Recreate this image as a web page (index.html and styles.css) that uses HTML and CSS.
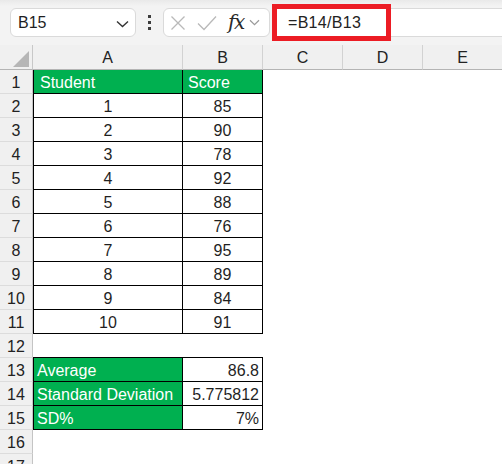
FILE: index.html
```html
<!DOCTYPE html>
<html lang="en">
<head>
  <meta charset="UTF-8" />
  <title>SD% sheet</title>
  <link rel="stylesheet" href="styles.css">
</head>
<body>
  <div class="toolbar">
    <div class="name-box">
      <span>B15</span>
      <svg class="chev" width="13" height="8" viewBox="0 0 13 8"><path d="M1 1.5 L6.5 6.5 L12 1.5" fill="none" stroke="#333" stroke-width="1.4"/></svg>
    </div>
    <div class="dots"><i></i><i></i><i></i></div>
    <div class="fn-box">
      <svg width="16" height="16" viewBox="0 0 16 16"><path d="M1.5 1.5 L14.5 14.5 M14.5 1.5 L1.5 14.5" stroke="#b9b9b9" stroke-width="1.3"/></svg>
      <svg width="20" height="16" viewBox="0 0 20 16"><path d="M1 8.5 L7 14.5 L19 1.5" fill="none" stroke="#b9b9b9" stroke-width="1.3"/></svg>
      <span class="fx">fx</span>
      <svg class="chev-sm" width="11" height="7" viewBox="0 0 11 7"><path d="M1 1.2 L5.5 5.6 L10 1.2" fill="none" stroke="#9a9a9a" stroke-width="1.2"/></svg>
    </div>
    <div class="formula-bar">
      <span class="formula">=B14/B13</span>
    </div>
  </div>

  <div class="sheet">
    <div class="corner"><span class="tri"></span></div>
    <div class="colhead">A</div>
    <div class="colhead">B</div>
    <div class="colhead">C</div>
    <div class="colhead">D</div>
    <div class="colhead">E</div>

    <div class="rowhead">1</div>
    <div class="cell box green first">Student</div>
    <div class="cell box green first">Score</div>
    <div class="cell"></div><div class="cell"></div><div class="cell"></div>

    <div class="rowhead">2</div><div class="cell box center">1</div><div class="cell box center">85</div><div class="cell"></div><div class="cell"></div><div class="cell"></div>
    <div class="rowhead">3</div><div class="cell box center">2</div><div class="cell box center">90</div><div class="cell"></div><div class="cell"></div><div class="cell"></div>
    <div class="rowhead">4</div><div class="cell box center">3</div><div class="cell box center">78</div><div class="cell"></div><div class="cell"></div><div class="cell"></div>
    <div class="rowhead">5</div><div class="cell box center">4</div><div class="cell box center">92</div><div class="cell"></div><div class="cell"></div><div class="cell"></div>
    <div class="rowhead">6</div><div class="cell box center">5</div><div class="cell box center">88</div><div class="cell"></div><div class="cell"></div><div class="cell"></div>
    <div class="rowhead">7</div><div class="cell box center">6</div><div class="cell box center">76</div><div class="cell"></div><div class="cell"></div><div class="cell"></div>
    <div class="rowhead">8</div><div class="cell box center">7</div><div class="cell box center">95</div><div class="cell"></div><div class="cell"></div><div class="cell"></div>
    <div class="rowhead">9</div><div class="cell box center">8</div><div class="cell box center">89</div><div class="cell"></div><div class="cell"></div><div class="cell"></div>
    <div class="rowhead">10</div><div class="cell box center">9</div><div class="cell box center">84</div><div class="cell"></div><div class="cell"></div><div class="cell"></div>
    <div class="rowhead">11</div><div class="cell box center">10</div><div class="cell box center">91</div><div class="cell"></div><div class="cell"></div><div class="cell"></div>

    <div class="rowhead">12</div><div class="cell under"></div><div class="cell under"></div><div class="cell"></div><div class="cell"></div><div class="cell"></div>

    <div class="rowhead">13</div><div class="cell box green">Average</div><div class="cell box right">86.8</div><div class="cell"></div><div class="cell"></div><div class="cell"></div>
    <div class="rowhead">14</div><div class="cell box green">Standard Deviation</div><div class="cell box right">5.775812</div><div class="cell"></div><div class="cell"></div><div class="cell"></div>
    <div class="rowhead">15</div><div class="cell box green">SD%</div><div class="cell box right">7%</div><div class="cell"></div><div class="cell"></div><div class="cell"></div>

    <div class="rowhead">16</div><div class="cell"></div><div class="cell"></div><div class="cell"></div><div class="cell"></div><div class="cell"></div>
    <div class="rowhead">17</div><div class="cell"></div><div class="cell"></div><div class="cell"></div><div class="cell"></div><div class="cell"></div>
  </div>
</body>
</html>
```

FILE: styles.css
```css
body {
  margin: 0;
  font-family: "Liberation Sans", Arial, sans-serif;
  color: #1f1f1f;
  background: #fff;
  width: 502px;
  height: 464px;
  overflow: hidden;
}
.toolbar {
  height: 45px;
  display: flex;
  align-items: center;
  background: linear-gradient(#e9e9e9, #f3f3f3 6px);
  box-sizing: border-box;
}
.name-box {
  margin-left: 10px;
  width: 126px;
  height: 29px;
  box-sizing: border-box;
  background: #fff;
  border: 1px solid #dadada;
  border-radius: 6px;
  display: flex;
  align-items: center;
  justify-content: space-between;
  padding: 0 6px 0 7px;
  font-size: 16px;
}
.name-box .chev {
  margin-top: 2px;
}
.dots {
  width: 27px;
  display: flex;
  flex-direction: column;
  align-items: center;
  gap: 3px;
}
.dots i {
  width: 3px;
  height: 3px;
  background: #3c3c3c;
}
.fn-box {
  width: 107px;
  height: 29px;
  box-sizing: border-box;
  background: #fff;
  border: 1px solid #dadada;
  border-radius: 6px;
  display: flex;
  align-items: center;
  padding-left: 6px;
  gap: 11px;
}
.fn-box .fx {
  font-family: "DejaVu Serif", "Liberation Serif", serif;
  font-style: italic;
  font-size: 20px;
  line-height: 20px;
  color: #2a2a2a;
  margin-left: 0;
  margin-top: -2px;
  letter-spacing: -1.5px;
}
.fn-box .chev-sm {
  margin-left: -6px;
}
.formula-bar {
  flex: 1;
  margin-left: 2px;
  height: 29px;
  background: #fff;
  border-top: 1px solid #dadada;
  border-bottom: 1px solid #dadada;
  box-sizing: border-box;
  display: flex;
  align-items: center;
}
.formula {
  width: 119px;
  height: 37px;
  margin: -4px 0;
  box-sizing: border-box;
  border: 5px solid #ec1c24;
  padding-left: 11px;
  font-size: 16px;
  line-height: 27px;
  color: #222;
  letter-spacing: 0.3px;
}

.sheet {
  display: grid;
  grid-template-columns: 33px 150px repeat(4, 80px);
  grid-template-rows: 25px;
  grid-auto-rows: 24px;
}
.corner, .colhead, .rowhead {
  background: #f0f0f0;
  box-sizing: border-box;
}
.corner {
  border-right: 1px solid #c8c8c8;
  border-bottom: 1px solid #b4b4b4;
  position: relative;
}
.corner .tri {
  position: absolute;
  right: 3px;
  bottom: 2px;
  width: 0;
  height: 0;
  border-left: 16px solid transparent;
  border-bottom: 16px solid #b6b6b6;
}
.colhead {
  border-right: 1px solid #d2d2d2;
  border-bottom: 1px solid #b4b4b4;
  text-align: center;
  font-size: 16px;
  line-height: 26px;
  color: #222;
}
.rowhead {
  border-right: 1px solid #c4c4c4;
  border-bottom: 1px solid #dcdcdc;
  text-align: center;
  font-size: 16px;
  line-height: 25px;
  color: #222;
}
.cell {
  box-sizing: border-box;
  font-size: 16px;
  line-height: 25px;
  white-space: nowrap;
  overflow: hidden;
}
.box {
  border-right: 1px solid #000;
  border-bottom: 1px solid #000;
  padding: 0 3px;
}
.box:nth-child(6n+2) {
  border-left: 1px solid #000;
  padding-left: 3px;
}
.under {
  border-bottom: 1px solid #000;
}
.green {
  background: #00b050;
  color: #fff;
}
.first {
  padding-left: 5px;
}
.box.first:nth-child(6n+2) {
  padding-left: 6px;
}
.center {
  text-align: center;
}
.right {
  text-align: right;
}
```
